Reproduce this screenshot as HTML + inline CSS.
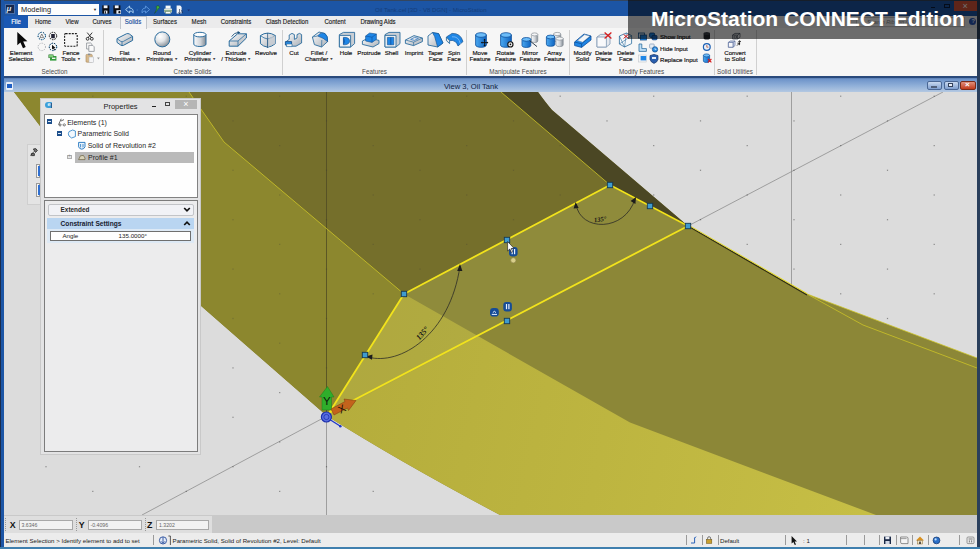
<!DOCTYPE html>
<html lang="en">
<head>
<meta charset="utf-8">
<title>MicroStation CONNECT Edition</title>
<style>
html,body{margin:0;padding:0;}
body{width:980px;height:549px;overflow:hidden;position:relative;background:#dcdcdc;font-family:"Liberation Sans",sans-serif;color:#222;}
.abs{position:absolute;}
.t{position:absolute;white-space:nowrap;line-height:1;}
.c{transform:translateX(-50%);text-align:center;}
/* title bar */
#titlebar{left:0;top:0;width:980px;height:16px;background:linear-gradient(#34465f 0,#34465f 1px,#1c55a5 1.2px);}
#tabrow{left:4px;top:16px;width:974px;height:12px;background:#ebebec;}
#ribbon{left:4px;top:28px;width:974px;height:48px;background:#f6f6f6;}
#viewtitle{left:4px;top:75.5px;width:974px;height:16.6px;background:linear-gradient(#2a4a7c 0,#2a4a7c 2px,#6b91c8 2.6px,#8fafd8 9.5px,#b6cae3 16.6px);}
#lborder{left:0;top:0;width:4px;height:549px;background:linear-gradient(90deg,#1b2c4c 0,#1b2c4c 0.9px,#1c55a5 1px);}
#rborder{left:977px;top:0;width:3px;height:549px;background:#2a3f5c;}
#bborder{left:0;top:547px;width:980px;height:2px;background:#3f7fae;}
#coordbar{left:4px;top:515px;width:973px;height:18px;background:#c9c9c9;}
#coordl{left:4px;top:516px;width:208px;height:17px;background:#dedede;}
#statusbar{left:4px;top:533px;width:973px;height:14px;background:#ececec;}
.tab{font-size:7.2px;top:18.2px;color:#1a1a1a;-webkit-text-stroke:0.15px;transform:translateX(-50%) scaleX(0.84);}
.rl{font-size:6.1px;color:#181818;-webkit-text-stroke:0.18px #181818;line-height:5.5px;text-align:center;transform:translateX(-50%);}
.da{font-size:3.4px;color:#555;vertical-align:1px;line-height:0;}
.gl{font-size:6.3px;color:#4a4a4a;top:68.8px;transform:translateX(-50%);}
.sep{position:absolute;top:30px;width:1px;height:45px;background:#d0d0d0;}
.st{font-size:6.1px;top:538px;color:#222;}
.ssep{position:absolute;top:535px;width:1px;height:10px;background:#9a9a9a;}
.ci{position:absolute;top:520px;height:10px;background:#f2f2f2;border:1px solid #a8a8a8;box-sizing:border-box;font-size:5.2px;color:#666;line-height:8px;padding-left:2px;}
.tr{font-size:7px;color:#1e1e1e;}
.cl{font-size:8.8px;font-weight:bold;top:521px;color:#111;}
</style>
</head>
<body>
<!-- frame -->
<div class="abs" id="titlebar"></div>
<div class="abs" id="tabrow"></div>
<div class="abs" id="ribbon"></div>
<div class="abs" id="viewtitle"></div>

<!-- VIEWPORT -->
<svg class="abs" style="left:4px;top:92px" width="973" height="423" viewBox="4 92 973 423">
  <rect x="4" y="92" width="973" height="423" fill="#dcdcdc"/>
  <!-- axis lines on background -->
  <g stroke="#8e8e8e" stroke-width="0.8" fill="none">
    <line x1="791.5" y1="92" x2="791.5" y2="287"/>
    <line x1="688" y1="226" x2="943" y2="92"/>
    <line x1="327" y1="416" x2="142" y2="515"/>
    <line x1="326.5" y1="416" x2="326.5" y2="515"/>
  </g>
  <g id="dots" fill="#3a3a3a" opacity="0.5"><rect x="92.2" y="95.6" width="1.2" height="1.2"/><rect x="185.7" y="95.6" width="1.2" height="1.2"/><rect x="279.1" y="95.6" width="1.2" height="1.2"/><rect x="372.6" y="95.6" width="1.2" height="1.2"/><rect x="466.1" y="95.6" width="1.2" height="1.2"/><rect x="559.6" y="95.6" width="1.2" height="1.2"/><rect x="653.1" y="95.6" width="1.2" height="1.2"/><rect x="746.6" y="95.6" width="1.2" height="1.2"/><rect x="840.1" y="95.6" width="1.2" height="1.2"/><rect x="933.6" y="95.6" width="1.2" height="1.2"/><rect x="45.4" y="120.3" width="1.2" height="1.2"/><rect x="138.9" y="120.3" width="1.2" height="1.2"/><rect x="232.4" y="120.3" width="1.2" height="1.2"/><rect x="325.9" y="120.3" width="1.2" height="1.2"/><rect x="419.4" y="120.3" width="1.2" height="1.2"/><rect x="512.9" y="120.3" width="1.2" height="1.2"/><rect x="606.4" y="120.3" width="1.2" height="1.2"/><rect x="699.9" y="120.3" width="1.2" height="1.2"/><rect x="793.4" y="120.3" width="1.2" height="1.2"/><rect x="886.9" y="120.3" width="1.2" height="1.2"/><rect x="92.2" y="145.0" width="1.2" height="1.2"/><rect x="185.7" y="145.0" width="1.2" height="1.2"/><rect x="279.1" y="145.0" width="1.2" height="1.2"/><rect x="372.6" y="145.0" width="1.2" height="1.2"/><rect x="466.1" y="145.0" width="1.2" height="1.2"/><rect x="559.6" y="145.0" width="1.2" height="1.2"/><rect x="653.1" y="145.0" width="1.2" height="1.2"/><rect x="746.6" y="145.0" width="1.2" height="1.2"/><rect x="840.1" y="145.0" width="1.2" height="1.2"/><rect x="933.6" y="145.0" width="1.2" height="1.2"/><rect x="45.4" y="169.7" width="1.2" height="1.2"/><rect x="138.9" y="169.7" width="1.2" height="1.2"/><rect x="232.4" y="169.7" width="1.2" height="1.2"/><rect x="325.9" y="169.7" width="1.2" height="1.2"/><rect x="419.4" y="169.7" width="1.2" height="1.2"/><rect x="512.9" y="169.7" width="1.2" height="1.2"/><rect x="606.4" y="169.7" width="1.2" height="1.2"/><rect x="699.9" y="169.7" width="1.2" height="1.2"/><rect x="793.4" y="169.7" width="1.2" height="1.2"/><rect x="886.9" y="169.7" width="1.2" height="1.2"/><rect x="92.2" y="194.4" width="1.2" height="1.2"/><rect x="185.7" y="194.4" width="1.2" height="1.2"/><rect x="279.1" y="194.4" width="1.2" height="1.2"/><rect x="372.6" y="194.4" width="1.2" height="1.2"/><rect x="466.1" y="194.4" width="1.2" height="1.2"/><rect x="559.6" y="194.4" width="1.2" height="1.2"/><rect x="653.1" y="194.4" width="1.2" height="1.2"/><rect x="746.6" y="194.4" width="1.2" height="1.2"/><rect x="840.1" y="194.4" width="1.2" height="1.2"/><rect x="933.6" y="194.4" width="1.2" height="1.2"/><rect x="45.4" y="219.1" width="1.2" height="1.2"/><rect x="138.9" y="219.1" width="1.2" height="1.2"/><rect x="232.4" y="219.1" width="1.2" height="1.2"/><rect x="325.9" y="219.1" width="1.2" height="1.2"/><rect x="419.4" y="219.1" width="1.2" height="1.2"/><rect x="512.9" y="219.1" width="1.2" height="1.2"/><rect x="606.4" y="219.1" width="1.2" height="1.2"/><rect x="699.9" y="219.1" width="1.2" height="1.2"/><rect x="793.4" y="219.1" width="1.2" height="1.2"/><rect x="886.9" y="219.1" width="1.2" height="1.2"/><rect x="92.2" y="243.8" width="1.2" height="1.2"/><rect x="185.7" y="243.8" width="1.2" height="1.2"/><rect x="279.1" y="243.8" width="1.2" height="1.2"/><rect x="372.6" y="243.8" width="1.2" height="1.2"/><rect x="466.1" y="243.8" width="1.2" height="1.2"/><rect x="559.6" y="243.8" width="1.2" height="1.2"/><rect x="653.1" y="243.8" width="1.2" height="1.2"/><rect x="746.6" y="243.8" width="1.2" height="1.2"/><rect x="840.1" y="243.8" width="1.2" height="1.2"/><rect x="933.6" y="243.8" width="1.2" height="1.2"/><rect x="45.4" y="268.5" width="1.2" height="1.2"/><rect x="138.9" y="268.5" width="1.2" height="1.2"/><rect x="232.4" y="268.5" width="1.2" height="1.2"/><rect x="325.9" y="268.5" width="1.2" height="1.2"/><rect x="419.4" y="268.5" width="1.2" height="1.2"/><rect x="512.9" y="268.5" width="1.2" height="1.2"/><rect x="606.4" y="268.5" width="1.2" height="1.2"/><rect x="699.9" y="268.5" width="1.2" height="1.2"/><rect x="793.4" y="268.5" width="1.2" height="1.2"/><rect x="886.9" y="268.5" width="1.2" height="1.2"/><rect x="92.2" y="293.2" width="1.2" height="1.2"/><rect x="185.7" y="293.2" width="1.2" height="1.2"/><rect x="279.1" y="293.2" width="1.2" height="1.2"/><rect x="372.6" y="293.2" width="1.2" height="1.2"/><rect x="466.1" y="293.2" width="1.2" height="1.2"/><rect x="559.6" y="293.2" width="1.2" height="1.2"/><rect x="653.1" y="293.2" width="1.2" height="1.2"/><rect x="746.6" y="293.2" width="1.2" height="1.2"/><rect x="840.1" y="293.2" width="1.2" height="1.2"/><rect x="933.6" y="293.2" width="1.2" height="1.2"/><rect x="45.4" y="317.9" width="1.2" height="1.2"/><rect x="138.9" y="317.9" width="1.2" height="1.2"/><rect x="232.4" y="317.9" width="1.2" height="1.2"/><rect x="325.9" y="317.9" width="1.2" height="1.2"/><rect x="419.4" y="317.9" width="1.2" height="1.2"/><rect x="512.9" y="317.9" width="1.2" height="1.2"/><rect x="606.4" y="317.9" width="1.2" height="1.2"/><rect x="699.9" y="317.9" width="1.2" height="1.2"/><rect x="793.4" y="317.9" width="1.2" height="1.2"/><rect x="886.9" y="317.9" width="1.2" height="1.2"/><rect x="92.2" y="342.6" width="1.2" height="1.2"/><rect x="185.7" y="342.6" width="1.2" height="1.2"/><rect x="279.1" y="342.6" width="1.2" height="1.2"/><rect x="372.6" y="342.6" width="1.2" height="1.2"/><rect x="466.1" y="342.6" width="1.2" height="1.2"/><rect x="559.6" y="342.6" width="1.2" height="1.2"/><rect x="653.1" y="342.6" width="1.2" height="1.2"/><rect x="746.6" y="342.6" width="1.2" height="1.2"/><rect x="840.1" y="342.6" width="1.2" height="1.2"/><rect x="933.6" y="342.6" width="1.2" height="1.2"/><rect x="45.4" y="367.3" width="1.2" height="1.2"/><rect x="138.9" y="367.3" width="1.2" height="1.2"/><rect x="232.4" y="367.3" width="1.2" height="1.2"/><rect x="325.9" y="367.3" width="1.2" height="1.2"/><rect x="419.4" y="367.3" width="1.2" height="1.2"/><rect x="512.9" y="367.3" width="1.2" height="1.2"/><rect x="606.4" y="367.3" width="1.2" height="1.2"/><rect x="699.9" y="367.3" width="1.2" height="1.2"/><rect x="793.4" y="367.3" width="1.2" height="1.2"/><rect x="886.9" y="367.3" width="1.2" height="1.2"/><rect x="92.2" y="392.0" width="1.2" height="1.2"/><rect x="185.7" y="392.0" width="1.2" height="1.2"/><rect x="279.1" y="392.0" width="1.2" height="1.2"/><rect x="372.6" y="392.0" width="1.2" height="1.2"/><rect x="466.1" y="392.0" width="1.2" height="1.2"/><rect x="559.6" y="392.0" width="1.2" height="1.2"/><rect x="653.1" y="392.0" width="1.2" height="1.2"/><rect x="746.6" y="392.0" width="1.2" height="1.2"/><rect x="840.1" y="392.0" width="1.2" height="1.2"/><rect x="933.6" y="392.0" width="1.2" height="1.2"/><rect x="45.4" y="416.7" width="1.2" height="1.2"/><rect x="138.9" y="416.7" width="1.2" height="1.2"/><rect x="232.4" y="416.7" width="1.2" height="1.2"/><rect x="325.9" y="416.7" width="1.2" height="1.2"/><rect x="419.4" y="416.7" width="1.2" height="1.2"/><rect x="512.9" y="416.7" width="1.2" height="1.2"/><rect x="606.4" y="416.7" width="1.2" height="1.2"/><rect x="699.9" y="416.7" width="1.2" height="1.2"/><rect x="793.4" y="416.7" width="1.2" height="1.2"/><rect x="886.9" y="416.7" width="1.2" height="1.2"/><rect x="92.2" y="441.4" width="1.2" height="1.2"/><rect x="185.7" y="441.4" width="1.2" height="1.2"/><rect x="279.1" y="441.4" width="1.2" height="1.2"/><rect x="372.6" y="441.4" width="1.2" height="1.2"/><rect x="466.1" y="441.4" width="1.2" height="1.2"/><rect x="559.6" y="441.4" width="1.2" height="1.2"/><rect x="653.1" y="441.4" width="1.2" height="1.2"/><rect x="746.6" y="441.4" width="1.2" height="1.2"/><rect x="840.1" y="441.4" width="1.2" height="1.2"/><rect x="933.6" y="441.4" width="1.2" height="1.2"/><rect x="45.4" y="466.1" width="1.2" height="1.2"/><rect x="138.9" y="466.1" width="1.2" height="1.2"/><rect x="232.4" y="466.1" width="1.2" height="1.2"/><rect x="325.9" y="466.1" width="1.2" height="1.2"/><rect x="419.4" y="466.1" width="1.2" height="1.2"/><rect x="512.9" y="466.1" width="1.2" height="1.2"/><rect x="606.4" y="466.1" width="1.2" height="1.2"/><rect x="699.9" y="466.1" width="1.2" height="1.2"/><rect x="793.4" y="466.1" width="1.2" height="1.2"/><rect x="886.9" y="466.1" width="1.2" height="1.2"/><rect x="92.2" y="490.8" width="1.2" height="1.2"/><rect x="185.7" y="490.8" width="1.2" height="1.2"/><rect x="279.1" y="490.8" width="1.2" height="1.2"/><rect x="372.6" y="490.8" width="1.2" height="1.2"/><rect x="466.1" y="490.8" width="1.2" height="1.2"/><rect x="559.6" y="490.8" width="1.2" height="1.2"/><rect x="653.1" y="490.8" width="1.2" height="1.2"/><rect x="746.6" y="490.8" width="1.2" height="1.2"/><rect x="840.1" y="490.8" width="1.2" height="1.2"/><rect x="933.6" y="490.8" width="1.2" height="1.2"/></g>
  <!-- main body (medium olive) -->
  <path d="M14,92 L538,92 Q546,103 552,110 L688,226 L807,294 L977,358 L977,515 L500,515 Q400,462 327,416 L200,305 Q90,200 40,126 Z" fill="#8c8737"/>
  <!-- dark olive upper area -->
  <path d="M189,92 L501,92 L610,185 L404,294 L224,142 Z" fill="#766f2c"/>
  <!-- shadow strip -->
  <path d="M501,92 L538,92 Q546,103 552,110 L688,226 L650,206 L610,185 Z" fill="#4b4724"/>
  <!-- bright yellow band -->
  <linearGradient id="gbright" gradientUnits="userSpaceOnUse" x1="340" y1="400" x2="860" y2="515"><stop offset="0" stop-color="#b5ad3c"/><stop offset="0.5" stop-color="#bdb540"/><stop offset="1" stop-color="#c6be45"/></linearGradient>
  <path d="M327,416 L404,294 L630,422.5 L876,515 L500,515 Q400,462 327,416 Z" fill="url(#gbright)"/>
  <path d="M189,92 L14,92 L40,126 Q90,200 200,305 L327,416 L404,294 L224,142 Z" fill="#8c872f"/>
  <!-- left of profile, lighter olive wedge stays body colour -->
  <!-- profile interior overlay -->
  <path d="M327,416 L404,294 L610,185 L688,226 Z" fill="#9d9c4c" opacity="0.22"/>
  <!-- vertical axis line over body -->
  <line x1="326.5" y1="92" x2="326.5" y2="416" stroke="#514d24" stroke-width="0.8"/>
  <!-- thin yellow edge lines -->
  <g stroke="#cfc628" stroke-width="0.9" fill="none" opacity="0.85">
    <path d="M189,92 L224,142 L404,294"/>
    <path d="M501,92 L610,185"/>
    <path d="M688,226 L807,294 L977,358"/>
    <path d="M807,294 L863,325 L977,368"/>
  </g>
  <path d="M610,185 L688,226 L807,295" stroke="#2f2c14" stroke-width="1.2" fill="none"/>
  <path d="M690,226 L807,293.5" stroke="#e2d820" stroke-width="0.9" fill="none"/>
  
  <clipPath id="upclip"><path d="M14,92 L501,92 L610,185 L404,294 L327,416 L200,305 Q90,200 40,126 Z"/></clipPath>
  <use href="#dots" clip-path="url(#upclip)" opacity="0.55"/>
  <!-- profile (thick yellow) -->
  <path d="M329,413 L404,294 L610,185 L688,226 Z" stroke="#f2e31c" stroke-width="1.8" fill="none" stroke-linejoin="round"/>
  <!-- dimension arcs -->
  <g stroke="#262626" stroke-width="0.75" fill="none">
    <path d="M368,357 C400,366 450,335 460,266"/>
    <path d="M576,204 C580,232 625,232 635,199"/>
  </g>
  <g fill="#1c1c1c">
    <path d="M460,264 L457.2,271 L462.4,271 Z"/>
    <path d="M366,356.6 L372.5,354.6 L372,359.8 Z"/>
    <path d="M575.6,202 L573.6,208.4 L578.6,208 Z"/>
    <path d="M636,197 L630.6,201 L635.4,204 Z"/>
  </g>
  <text x="422" y="336" font-family="Liberation Serif, serif" font-style="italic" font-weight="bold" font-size="7.8" fill="#161616" text-anchor="middle" transform="rotate(-50 422 333)">135°</text>
  <text x="600" y="221.5" font-family="Liberation Serif, serif" font-style="italic" font-weight="bold" font-size="6.6" fill="#161616" text-anchor="middle" transform="rotate(-8 600 219)">135°</text>
  <!-- vertex handles -->
  <g fill="#3f9bcf" stroke="#153a55" stroke-width="0.9">
    <rect x="401.3" y="291.3" width="5.4" height="5.4"/>
    <rect x="504.3" y="237.3" width="5.4" height="5.4"/>
    <rect x="607.3" y="182.3" width="5.4" height="5.4"/>
    <rect x="647.3" y="203.3" width="5.4" height="5.4"/>
    <rect x="685.3" y="223.3" width="5.4" height="5.4"/>
    <rect x="504.3" y="318.3" width="5.4" height="5.4"/>
    <rect x="362.3" y="352.3" width="5.4" height="5.4"/>
  </g>
  <!-- constraint badges -->
  <g>
    <rect x="509" y="247" width="8.6" height="9.4" rx="3" fill="#164c96"/>
    <rect x="511.6" y="249" width="1.2" height="5.2" fill="#e8f0ff"/><rect x="514" y="249" width="1.2" height="5.2" fill="#e8f0ff"/>
    <circle cx="513.3" cy="260.3" r="2.6" fill="#d9cf8a" stroke="#8c834a" stroke-width="0.6"/>
    <rect x="503.3" y="302" width="8.6" height="9.4" rx="3" fill="#164c96"/>
    <rect x="505.9" y="304" width="1.2" height="5.2" fill="#e8f0ff"/><rect x="508.3" y="304" width="1.2" height="5.2" fill="#e8f0ff"/>
    <rect x="490" y="308" width="8.8" height="8.6" rx="3.4" fill="#164c96"/>
    <path d="M491.8,314.4 h5.2 M492.8,312.6 q1.6,-2.6 3.2,0" stroke="#e8f0ff" stroke-width="1" fill="none"/>
  </g>
  <!-- mouse cursor -->
  <path d="M507.6,241.5 L507.6,251 L509.8,249 L511.4,252.4 L512.8,251.7 L511.2,248.5 L514,248.3 Z" fill="#fff" stroke="#111" stroke-width="0.6"/>
  <!-- ACS triad -->
  <g>
    <path d="M322,410 L322,397 L319.5,397 L327.5,386.5 L334,397 L331.5,397 L331.5,410 Z" fill="#2fae2b" stroke="#1f7d1c" stroke-width="0.5"/>
    <text x="326.8" y="405" font-size="11.5" fill="#0c1c0a" text-anchor="middle" font-family="Liberation Sans, sans-serif">Y</text>
    <path d="M331,409 L345,401.5 L344,399 L356,400.5 L348.5,410.5 L347.5,408 L334,415 Z" fill="#c3631c" stroke="#7a3a0c" stroke-width="0.5"/>
    <text x="342" y="412.4" font-size="10.5" fill="#1a0c04" text-anchor="middle" font-family="Liberation Sans, sans-serif" transform="rotate(-28 342 409)">X</text>
    <line x1="329" y1="419" x2="340" y2="426" stroke="#2038c8" stroke-width="1.3"/>
    <circle cx="340.3" cy="426.2" r="1.3" fill="#2038c8"/>
    <circle cx="326.4" cy="417" r="5" fill="#5a6fe0" stroke="#1c2fae" stroke-width="1.2"/>
    <circle cx="326.4" cy="417" r="2.6" fill="none" stroke="#1c2fae" stroke-width="0.8"/>
  </g>
</svg>

<!-- TABS -->
<div class="abs" style="left:4px;top:16px;width:24px;height:12px;background:#1a58b4;"></div>
<div class="t c tab" style="left:16px;color:#fff;">File</div>
<div class="abs" style="left:119.5px;top:15.5px;width:27px;height:13px;background:#f4f4f5;border:1px solid #c2c6cc;border-bottom:none;box-sizing:border-box;"></div>
<div class="t c tab" style="left:43px;">Home</div>
<div class="t c tab" style="left:72.3px;">View</div>
<div class="t c tab" style="left:101.7px;">Curves</div>
<div class="t c tab" style="left:132.6px;color:#1a4f9c;">Solids</div>
<div class="t c tab" style="left:165.3px;">Surfaces</div>
<div class="t c tab" style="left:198.8px;">Mesh</div>
<div class="t c tab" style="left:235.5px;">Constraints</div>
<div class="t c tab" style="left:287px;">Clash Detection</div>
<div class="t c tab" style="left:334.5px;">Content</div>
<div class="t c tab" style="left:377.5px;">Drawing Aids</div>
<!-- RIBBON LABELS -->
<div class="t rl" style="left:21px;top:50.4px;">Element<br>Selection</div>
<div class="t rl" style="left:71px;top:50.4px;">Fence<br>Tools <span class="da">▼</span></div>
<div class="t rl" style="left:124.5px;top:50.4px;">Flat<br>Primitives <span class="da">▼</span></div>
<div class="t rl" style="left:162px;top:50.4px;">Round<br>Primitives <span class="da">▼</span></div>
<div class="t rl" style="left:200px;top:50.4px;">Cylinder<br>Primitives <span class="da">▼</span></div>
<div class="t rl" style="left:236px;top:50.4px;">Extrude<br>/ Thicken <span class="da">▼</span></div>
<div class="t rl" style="left:266px;top:50.4px;">Revolve</div>
<div class="t rl" style="left:294px;top:50.4px;">Cut</div>
<div class="t rl" style="left:319px;top:50.4px;">Fillet /<br>Chamfer <span class="da">▼</span></div>
<div class="t rl" style="left:346px;top:50.4px;">Hole</div>
<div class="t rl" style="left:369px;top:50.4px;">Protrude</div>
<div class="t rl" style="left:391.5px;top:50.4px;">Shell</div>
<div class="t rl" style="left:414px;top:50.4px;">Imprint</div>
<div class="t rl" style="left:435.5px;top:50.4px;">Taper<br>Face</div>
<div class="t rl" style="left:454px;top:50.4px;">Spin<br>Face</div>
<div class="t rl" style="left:480px;top:50.4px;">Move<br>Feature</div>
<div class="t rl" style="left:505.5px;top:50.4px;">Rotate<br>Feature</div>
<div class="t rl" style="left:530px;top:50.4px;">Mirror<br>Feature</div>
<div class="t rl" style="left:554.5px;top:50.4px;">Array<br>Feature</div>
<div class="t rl" style="left:582.5px;top:50.4px;">Modify<br>Solid</div>
<div class="t rl" style="left:603.7px;top:50.4px;">Delete<br>Piece</div>
<div class="t rl" style="left:625.7px;top:50.4px;">Delete<br>Face</div>
<div class="t rl" style="left:735px;top:50.4px;">Convert<br>to Solid</div>
<div class="t" style="left:660px;top:33.9px;font-size:6.1px;color:#181818;-webkit-text-stroke:0.18px #181818;">Show Input</div>
<div class="t" style="left:660px;top:45.9px;font-size:6.1px;color:#181818;-webkit-text-stroke:0.18px #181818;">Hide Input</div>
<div class="t" style="left:660px;top:57.3px;font-size:6.1px;color:#181818;-webkit-text-stroke:0.18px #181818;">Replace Input</div>
<div class="t gl" style="left:54.5px;">Selection</div>
<div class="t gl" style="left:192.5px;">Create Solids</div>
<div class="t gl" style="left:374.5px;">Features</div>
<div class="t gl" style="left:518px;">Manipulate Features</div>
<div class="t gl" style="left:641.7px;">Modify Features</div>
<div class="t gl" style="left:735px;">Solid Utilities</div>
<div class="sep" style="left:103px;"></div>
<div class="sep" style="left:281.5px;"></div>
<div class="sep" style="left:466.3px;"></div>
<div class="sep" style="left:568.7px;"></div>
<div class="sep" style="left:714px;"></div>
<div class="sep" style="left:756px;"></div>
<!-- title bar content -->
<div class="abs" style="left:5px;top:4px;width:10px;height:10px;background:#16294e;border:1px solid #4a6ea8;box-sizing:border-box;"></div>
<div class="t" style="left:6.5px;top:5px;font-size:8px;font-style:italic;font-weight:bold;color:#dfe8f6;">μ</div>
<div class="abs" style="left:18px;top:4px;width:81px;height:11px;background:#fdfdfd;"></div>
<div class="t" style="left:21px;top:6px;font-size:7.4px;color:#222;">Modeling</div>
<div class="t" style="left:93px;top:8px;font-size:4px;color:#222;">▼</div>
<div class="t" style="left:375px;top:7.4px;font-size:6.1px;color:#153e7c;">Oil Tank.cel [3D - V8 DGN] - MicroStation</div>
<div class="abs" style="left:856px;top:17px;width:109px;height:10px;background:#fbfbfb;border:1px solid #c6c6c6;box-sizing:border-box;"></div>
<div class="t" style="left:867px;top:19.5px;font-size:5.6px;font-style:italic;color:#8a8a8a;">Search Ribbon (F4)</div>
<div class="abs" style="left:954px;top:1px;width:23px;height:10px;background:#d8563a;"></div>
<div class="t" style="left:962.6px;top:1.6px;font-size:9px;color:#fff;">×</div>
<div class="abs" style="left:943.6px;top:4px;width:6px;height:4.4px;border:1px solid #0a1c3c;border-top-width:1.4px;box-sizing:border-box;"></div>
<div class="abs" style="left:931px;top:7px;width:4px;height:1px;background:#0a1c3c;"></div>
<div class="abs" style="left:969.4px;top:18px;width:7px;height:7px;border-radius:4px;background:#2a55b8;"></div><div class="t" style="left:971.4px;top:19px;font-size:5.6px;font-weight:bold;color:#e8f0ff;">?</div>
<!-- view title -->
<div class="t c" style="left:471px;top:82.5px;font-size:7.6px;color:#10233f;">View 3, Oil Tank</div>
<div class="abs" style="left:6px;top:82px;width:7px;height:8px;background:#e8eef8;border-radius:1px;"></div>
<div class="abs" style="left:7px;top:84px;width:5px;height:4px;background:#1f5fc4;"></div>
<div class="abs" style="left:927px;top:81px;width:15px;height:9px;border-radius:2px;background:linear-gradient(#c9d9ef,#7f9fcf);border:1px solid #4a6794;box-sizing:border-box;"></div>
<div class="abs" style="left:931px;top:86px;width:6px;height:2px;background:#f4f7fb;border:0.5px solid #51617c;box-sizing:border-box;"></div>
<div class="abs" style="left:943.5px;top:81px;width:15px;height:9px;border-radius:2px;background:linear-gradient(#c9d9ef,#7f9fcf);border:1px solid #4a6794;box-sizing:border-box;"></div>
<div class="abs" style="left:948px;top:83px;width:5px;height:4px;border:1px solid #33425c;box-sizing:border-box;background:#e8eef8"></div>
<div class="abs" style="left:960px;top:81px;width:16px;height:9px;border-radius:2px;background:linear-gradient(#e0907c,#c23a1c);border:1px solid #7a2a18;box-sizing:border-box;"></div>
<div class="t" style="left:965px;top:80.5px;font-size:8px;font-weight:bold;color:#fff;">×</div>

<!-- RIBBON ICONS -->
<svg class="abs" style="left:0;top:0" width="980" height="80" viewBox="0 0 980 80">
<defs>
  <linearGradient id="gw" x1="0" y1="0" x2="1" y2="1"><stop offset="0" stop-color="#fbfbfc"/><stop offset="1" stop-color="#a9afb6"/></linearGradient>
  <linearGradient id="gcyl" x1="0" y1="0" x2="1" y2="0"><stop offset="0" stop-color="#fafbfc"/><stop offset="0.55" stop-color="#d0d4d9"/><stop offset="1" stop-color="#7f8891"/></linearGradient>
  <linearGradient id="gbl" x1="0" y1="0" x2="1" y2="0"><stop offset="0" stop-color="#4aa8f0"/><stop offset="1" stop-color="#0f63c0"/></linearGradient>
  <radialGradient id="gsph" cx="0.36" cy="0.30" r="0.78"><stop offset="0" stop-color="#ffffff"/><stop offset="0.45" stop-color="#e2e5e8"/><stop offset="1" stop-color="#79828b"/></radialGradient>
</defs>
<!-- quick access toolbar -->
<g>
  <rect x="102.3" y="5.4" width="7" height="8.2" fill="#0b0d14"/><rect x="103.7" y="5.4" width="3.8" height="2.8" fill="#f2f5fa"/><rect x="104.2" y="10.6" width="3.2" height="3" fill="#e6ebf4"/><rect x="104.9" y="11.2" width="1" height="2.4" fill="#0b0d14"/>
  <rect x="113.4" y="5.4" width="7" height="8.2" fill="#0b0d14"/><rect x="114.8" y="5.4" width="3.8" height="2.8" fill="#f2f5fa"/><rect x="116.4" y="10.2" width="4.6" height="3.6" fill="#e6ebf4"/><circle cx="119.4" cy="12.2" r="1.1" fill="#0b0d14"/>
  <path d="M125.6,9.6 L129.6,6 L129.6,8 Q133.6,8 133.2,12.8 Q132,10.8 129.6,11 L129.6,13 Z" fill="#1c55a5" stroke="#b6daf6" stroke-width="0.9" stroke-linejoin="round"/>
  <circle cx="137.2" cy="10" r="0.6" fill="#4f86d0"/>
  <path d="M149.6,9.6 L145.6,6 L145.6,8 Q141.6,8 142,12.8 Q143.2,10.8 145.6,11 L145.6,13 Z" fill="#1c55a5" stroke="#5f98e0" stroke-width="0.9" stroke-linejoin="round"/>
  <path d="M154.6,13.4 L156.8,8.6 L156,6.6 L158.4,5.4 L159.6,7.6 L158,9.2 Z" fill="#3fae3a" stroke="#163a14" stroke-width="0.4"/>
  <rect x="164.2" y="8.6" width="7.8" height="4" rx="0.6" fill="#dfe6d8"/><rect x="165.6" y="5.6" width="5" height="3" fill="#f8faf8"/><rect x="165.6" y="11.4" width="5" height="2.4" fill="#f8faf8" stroke="#5a7a5a" stroke-width="0.4"/><rect x="164.2" y="10.4" width="7.8" height="1" fill="#5f8a5f"/>
  <path d="M176.6,5.6 h3.6 l1.4,1.4 v6.6 h-5 z" fill="#f4f6fa"/><path d="M179.6,9 v4.6 M178.4,12.4 l1.2,1.4 l1.2,-1.4 M181.6,10 l1,3" stroke="#1b2c4c" stroke-width="0.7" fill="none"/>
  <path d="M187.4,9.4 h2.6 l-1.3,1.8 z" fill="#1b2c6c"/>
</g>
<!-- Element selection arrow -->
<path d="M17.3,32 L17.3,45.2 L20.4,42.4 L23,48.2 L25.7,47 L23.2,41.6 L27.4,41.3 Z" fill="#0a0a0a"/>
<!-- small selection icons -->
<g fill="none" stroke-width="1">
  <circle cx="41.8" cy="36" r="3.7" stroke="#3a9ad8" stroke-dasharray="1.6 1"/><circle cx="41.8" cy="36" r="3.7" stroke="#1a2a3a" stroke-dasharray="0.9 1.7"/>
  <path d="M40,37.6 L41.8,34 L43.6,37.6 Z" stroke="#444" stroke-width="0.6"/>
  <circle cx="53" cy="36" r="3.7" stroke="#111" stroke-dasharray="1.6 1"/>
  <rect x="51.2" y="34" width="3.6" height="4.2" fill="#223" stroke="none"/>
  <circle cx="41.8" cy="46.9" r="3.7" stroke="#8a8f98" stroke-dasharray="1.2 1.2" stroke-width="0.7"/>
  <circle cx="53" cy="46.9" r="3.7" stroke="#2a8ad0" stroke-dasharray="1.6 1"/><circle cx="53" cy="46.9" r="3.7" stroke="#111" stroke-dasharray="0.9 1.7"/>
  <path d="M52,44.8 L52,49.4 L53.2,48.4 L54.2,50.2 L55,49.8 L54.1,48.1 L55.6,48 Z" fill="#111" stroke="none"/>
</g>
<rect x="50" y="56" width="6.4" height="4.6" fill="#2f9a3a"/><rect x="48.8" y="54.8" width="4.4" height="3" fill="#7fd07a" stroke="#2a6a2f" stroke-width="0.5"/><rect x="52" y="57.6" width="3.4" height="1.4" fill="#eaf6ea"/>
<!-- fence -->
<rect x="64.6" y="33.6" width="12.6" height="12.6" fill="none" stroke="#1c1c1c" stroke-width="1.1" stroke-dasharray="2 1.1" rx="1"/>
<!-- scissors / copy / paste -->
<g stroke="#222" stroke-width="0.9" fill="none">
  <path d="M87.2,32.6 L91.6,38 M92.2,32.6 L87.8,38"/>
  <circle cx="87.6" cy="38.8" r="1.4"/><circle cx="91.8" cy="38.8" r="1.4"/>
</g>
<g stroke="#8a8f96" stroke-width="0.8" fill="#fafafa">
  <path d="M86.6,43 h4 l1.4,1.4 v4.6 h-5.4 z"/><path d="M88.8,45.4 h4 l1.4,1.4 v4.6 h-5.4 z"/>
</g>
<rect x="86" y="54.4" width="6.2" height="7.8" rx="0.8" fill="#d8b98a" stroke="#a8865a" stroke-width="0.6"/><rect x="88" y="53.6" width="2.4" height="1.6" fill="#8a8f96"/><rect x="89" y="57" width="4.6" height="5.6" fill="#f4f4f6" stroke="#aeb2b8" stroke-width="0.5"/>
<path d="M97,57.6 h2.8 l-1.4,1.8 z" fill="#9a9a9a"/>

<!-- Flat primitives -->
<g stroke="#2c6d9e" stroke-width="1" stroke-linejoin="round">
  <path d="M117,38.6 L126.4,33.8 Q128,33.2 129.4,34 L132.6,36.4 L132.6,40.4 L123.4,45.4 Q122,46 120.6,45 L117,42.4 Z" fill="url(#gw)"/>
  <path d="M117,38.6 L120.8,41.4 Q122,42 123.4,41.4 L132.6,36.4 M122,42 L122,45.6" fill="none" stroke-width="0.8"/>
</g>
<!-- Round primitives -->
<circle cx="162.3" cy="39.4" r="7.5" fill="url(#gsph)" stroke="#2c6d9e" stroke-width="1"/>
<!-- Cylinder -->
<g stroke="#2c6d9e" stroke-width="1">
  <path d="M193.8,34.6 L193.8,44.2 A6.1,2.3 0 0 0 206,44.2 L206,34.6 Z" fill="url(#gcyl)"/>
  <ellipse cx="199.9" cy="34.6" rx="6.1" ry="2.3" fill="#fdfdfd"/>
</g>
<!-- Extrude / thicken -->
<g stroke="#2c6d9e" stroke-width="1" stroke-linejoin="round">
  <path d="M229.2,41 L237.6,33.8 L246.4,33.8 L246.4,38 L238,46.2 L229.2,46.2 Z" fill="url(#gw)"/>
  <path d="M229.2,41 L238,41 L246.4,33.8 M238,41 L238,46.2" fill="none" stroke-width="0.8"/>
  <path d="M231.6,36.6 Q234,32.6 238.6,32.4" fill="none" stroke="#1b4f7a" stroke-width="0.9"/><path d="M237.6,31 L240.4,32.4 L237.8,34 Z" fill="#1b4f7a" stroke="none"/>
</g>
<!-- Revolve -->
<g stroke="#2c6d9e" stroke-width="1" stroke-linejoin="round">
  <path d="M260.4,35.6 Q267.6,30.6 275.4,35.6 L275.4,43.6 Q272,46.6 267.6,47.2 Q263.4,46.6 260.4,43.6 Z" fill="url(#gw)"/>
  <path d="M260.4,35.6 Q264,38.4 267.6,39 Q272,38.4 275.4,35.6 M267.6,39 L267.6,47.2" fill="none" stroke-width="0.8"/>
  <path d="M267.6,39 L275.4,35.6 L275.4,43.6 L267.6,47.2 Z" fill="#c9ced4" stroke="none" opacity="0.8"/>
  <line x1="267.6" y1="33" x2="267.6" y2="48" stroke="#1b4f7a" stroke-width="0.7"/>
</g>

<!-- Cut -->
<g stroke="#2c6d9e" stroke-width="0.9" stroke-linejoin="round">
  <path d="M286.4,41.4 L289.2,39.4 L289.2,35 L292,33.4 L294.4,34.6 L294.4,39.4 L297,38 L297,34.6 L299.6,33.4 L301.6,34.6 L301.6,43 L296,46.2 L286.4,46.2 Z" fill="url(#gw)"/>
  <rect x="285.4" y="41.6" width="6.2" height="3.4" fill="#2a8ae0" stroke="#15508c"/>
  <rect x="286.6" y="44" width="5.4" height="2.6" fill="#f6f8fa" stroke="#2c6d9e" stroke-width="0.6"/>
</g>
<!-- Fillet / chamfer -->
<g stroke="#2c6d9e" stroke-width="0.9" stroke-linejoin="round">
  <path d="M312.4,37 L319,32 L325,33.6 Q328,36 327.6,41.6 L321.6,47 L314.4,44.6 Z" fill="url(#gw)"/>
  <path d="M317.6,36 Q321,31.4 325,33.6 Q328,36 327.6,41.6 Q324,38 317.6,36 Z" fill="#1f86e6" stroke="#15508c" stroke-width="0.6"/>
  <path d="M312.4,37 L317.6,36 M321.6,47 L321.8,40" fill="none" stroke-width="0.7"/>
</g>
<!-- Hole -->
<g stroke="#2c6d9e" stroke-width="0.9" stroke-linejoin="round">
  <path d="M339.4,34.6 L343.4,32.4 L354.6,32.4 L354.6,43.6 L350.6,47 L339.4,47 Z" fill="#c9ced4"/>
  <rect x="339.4" y="35.4" width="11.2" height="11.6" fill="#f1f3f5"/>
  <path d="M343.4,37.4 Q349.4,37 349.6,41 Q349.4,45 343.4,44.8 Z" fill="#1f86e6" stroke="#15508c" stroke-width="0.6"/>
  <path d="M343.4,37.4 Q346,41 343.4,44.8" fill="#0d4f9c" stroke="none"/>
</g>
<!-- Protrude -->
<g stroke="#2c6d9e" stroke-width="0.9" stroke-linejoin="round">
  <path d="M362.4,41 L368.4,38 L379,40.4 L379,43.6 L373,47 L362.4,44.4 Z" fill="url(#gw)"/>
  <path d="M365.6,36 L369.6,33 L376.4,34 L376.4,39.4 L372,42.4 L365.6,41 Z" fill="#1f86e6" stroke="#15508c" stroke-width="0.6"/>
  <path d="M365.6,36 L372,37.2 L376.4,34 M372,37.2 L372,42.4" fill="none" stroke="#0d4f9c" stroke-width="0.6"/>
</g>
<!-- Shell -->
<g stroke="#2c6d9e" stroke-width="0.9" stroke-linejoin="round">
  <path d="M385,34.6 L389,32.4 L400,32.4 L400,43.6 L396,47 L385,47 Z" fill="#c9ced4"/>
  <rect x="385" y="35.4" width="11" height="11.6" fill="#f1f3f5"/>
  <rect x="387.4" y="37.4" width="6.4" height="7.4" fill="#1f86e6" stroke="#15508c" stroke-width="0.6"/>
  <path d="M390.8,37.4 V44.8" stroke="#0d4f9c" stroke-width="0.8"/>
</g>
<!-- Imprint -->
<g stroke="#2c6d9e" stroke-width="0.9" stroke-linejoin="round">
  <path d="M405.4,40 L414,35.6 L422.4,38 L422.4,41.6 L413.6,45.6 L405.4,43.4 Z" fill="url(#gw)"/>
  <path d="M405.4,40 L413.6,42.2 L422.4,38 M413.6,42.2 V45.6" fill="none" stroke-width="0.7"/>
  <path d="M410.6,39.4 L414.6,37.4 L418.4,38.4 L414.4,40.4 Z" fill="#dfe3e7" stroke="#1f6fbf" stroke-width="0.7"/>
</g>
<!-- Taper face -->
<g stroke="#2c6d9e" stroke-width="0.9" stroke-linejoin="round">
  <path d="M428,36 L432.4,32.6 L438.6,33.6 L443,43 L437.6,47 L428,45 Z" fill="url(#gw)"/>
  <path d="M432.4,32.6 L438.6,33.6 L443,43 L437.6,47 L434.6,36.4 Z" fill="#1f86e6" stroke="#15508c" stroke-width="0.6"/>
</g>
<!-- Spin face -->
<g stroke="#2c6d9e" stroke-width="0.9" stroke-linejoin="round">
  <path d="M446.4,37 L452,33.4 Q460.6,33 463,41.6 L458,46 Q456,39.4 449.6,40.6 Z" fill="#1f86e6" stroke="#15508c" stroke-width="0.7"/>
  <path d="M446.4,37 L449.6,40.6 L449.6,43.6 L446.4,40.6 Z" fill="#dfe3e7"/>
  <path d="M452,36.8 Q458.6,36 460.4,43.8" fill="none" stroke="#8fc6f6" stroke-width="0.7"/>
</g>

<!-- Move feature -->
<g id="bcyl">
  <path d="M475.6,35 L475.6,45 A5.4,2.3 0 0 0 486.4,45 L486.4,35 Z" fill="url(#gbl)" stroke="#0d4f9c" stroke-width="0.8"/>
  <ellipse cx="481" cy="35" rx="5.4" ry="2.3" fill="#6cbcf8" stroke="#0d4f9c" stroke-width="0.8"/>
</g>
<path d="M484.6,39.8 V45.4 M481.8,42.6 H487.4" stroke="#111" stroke-width="0.9" fill="none"/>
<path d="M484.6,38.8 l-1.2,1.5 h2.4 z M484.6,46.4 l-1.2,-1.5 h2.4 z M480.8,42.6 l1.5,-1.2 v2.4 z M488.4,42.6 l-1.5,-1.2 v2.4 z" fill="#111"/>
<!-- Rotate feature -->
<path d="M500.6,35 L500.6,45 A5.4,2.3 0 0 0 511.4,45 L511.4,35 Z" fill="url(#gbl)" stroke="#0d4f9c" stroke-width="0.8"/>
<ellipse cx="506" cy="35" rx="5.4" ry="2.3" fill="#6cbcf8" stroke="#0d4f9c" stroke-width="0.8"/>
<circle cx="510.4" cy="44.4" r="2.6" fill="#e8e8e8" stroke="#111" stroke-width="1.1"/><circle cx="510.4" cy="44.4" r="0.8" fill="#111"/>
<!-- Mirror feature -->
<path d="M531.4,34.4 L531.4,41 A3.2,1.5 0 0 0 537.8,41 L537.8,34.4 Z" fill="url(#gcyl)" stroke="#8a9098" stroke-width="0.7"/>
<ellipse cx="534.6" cy="34.4" rx="3.2" ry="1.5" fill="#f4f5f6" stroke="#8a9098" stroke-width="0.7"/>
<path d="M522,39.4 L522,45.6 A4.4,1.9 0 0 0 530.8,45.6 L530.8,39.4 Z" fill="url(#gbl)" stroke="#0d4f9c" stroke-width="0.8"/>
<ellipse cx="526.4" cy="39.4" rx="4.4" ry="1.9" fill="#6cbcf8" stroke="#0d4f9c" stroke-width="0.8"/>
<path d="M529.6,40.6 L537,46.6" stroke="#1b2a3a" stroke-width="0.9"/>
<!-- Array feature -->
<g stroke="#8a9098" stroke-width="0.7">
  <path d="M553.6,34 L553.6,40 A3.6,1.6 0 0 0 560.8,40 L560.8,34 Z" fill="url(#gcyl)"/><ellipse cx="557.2" cy="34" rx="3.6" ry="1.6" fill="#f4f5f6"/>
  <path d="M556,38.6 L556,45 A3.6,1.6 0 0 0 563.2,45 L563.2,38.6 Z" fill="url(#gcyl)"/><ellipse cx="559.6" cy="38.6" rx="3.6" ry="1.6" fill="#f4f5f6"/>
</g>
<path d="M546.4,37 L546.4,44.4 A4.2,1.9 0 0 0 554.8,44.4 L554.8,37 Z" fill="url(#gbl)" stroke="#0d4f9c" stroke-width="0.8"/>
<ellipse cx="550.6" cy="37" rx="4.2" ry="1.9" fill="#6cbcf8" stroke="#0d4f9c" stroke-width="0.8"/>

<!-- Modify solid -->
<g stroke="#0d4f9c" stroke-width="0.8" stroke-linejoin="round">
  <path d="M574.6,42 L584,34 L591,36 L591,40 L581.6,47.4 L574.6,45.6 Z" fill="#1f86e6"/>
  <path d="M577.4,40.6 L584.6,34.6 L590,36.2 L582.6,42.2 Z" fill="#f4f6f8" stroke="#6a8fb4" stroke-width="0.6"/>
  <path d="M574.6,42 L581.6,43.8 L591,36 M581.6,43.8 V47.4" fill="none" stroke="#0a3f80" stroke-width="0.6"/>
</g>
<!-- Delete piece -->
<g stroke="#7f98b4" stroke-width="0.8" stroke-linejoin="round">
  <path d="M597,37 L600.6,34.4 L610,34.4 L610,44 L606.4,47 L597,47 Z" fill="#e4e8ee"/>
  <rect x="597" y="37" width="9.4" height="10" fill="#f8f9fb"/>
  <path d="M604.6,32.4 L611.4,38.6 M611.4,32.4 L604.6,38.6" stroke="#d81e1e" stroke-width="1.3" fill="none"/>
</g>
<!-- Delete face -->
<g stroke="#2c6d9e" stroke-width="0.8" fill="none" stroke-linejoin="round">
  <path d="M619.4,36 L626.4,33 L631.6,35.6 L631.6,43.6 L624.6,47 L619.4,44 Z" fill="#f6f8fa"/>
  <path d="M619.4,36 L624.6,47 M626.4,33 L624.6,47 M619.4,44 L631.6,35.6" stroke-width="0.6"/>
  <path d="M623.6,34.4 L628.4,38.4 M628.4,34.4 L623.6,38.4" stroke="#d81e1e" stroke-width="1"/>
</g>
<!-- Modify features small icons -->
<g>
  <rect x="638.4" y="33" width="6" height="5" fill="#d8e6f4" stroke="#15508c" stroke-width="0.8"/><rect x="640.4" y="35" width="6" height="5" fill="#1f86e6" stroke="#15508c" stroke-width="0.8"/>
  <rect x="649.6" y="33" width="5" height="4.4" rx="1" fill="#1f86e6" stroke="#0a3f80" stroke-width="0.8"/><rect x="652" y="35.4" width="5" height="4.4" rx="1" fill="#1a66c0" stroke="#0a3f80" stroke-width="0.8"/>
  <path d="M639,44 V51.4 H646.4 V48.6 H641.8 V44 Z" fill="#bfe0f8" stroke="#2c6d9e" stroke-width="0.8"/>
  <rect x="649.6" y="44" width="4.6" height="4.2" rx="0.8" fill="#e4ecf4" stroke="#7f98b4" stroke-width="0.7"/><circle cx="655" cy="49.4" r="2.7" fill="#2a8ae0" stroke="#15508c" stroke-width="0.7"/><path d="M655,47.8 V49.6 H656.4" stroke="#fff" stroke-width="0.6" fill="none"/>
  <rect x="638.6" y="55" width="7.6" height="7" fill="#f4f6f8" stroke="#c4c8ce" stroke-width="0.6"/><rect x="640.6" y="56" width="5.6" height="4.4" fill="#1f86e6"/>
  <path d="M650,55.6 L654,54.4 L658,55.6 V59.4 Q657,62.6 654,63.4 Q651,62.6 650,59.4 Z" fill="#2a5fae" stroke="#1b3a6a" stroke-width="0.7"/><path d="M652,57 h4 v2 h-4 z" fill="#e4ecf4"/>
  <path d="M703.6,33.6 V38 A3.2,1.5 0 0 0 710,38 V33.6 Z" fill="#23272e"/><ellipse cx="706.8" cy="33.6" rx="3.2" ry="1.5" fill="#3a3f48"/>
  <circle cx="706.8" cy="47" r="3.4" fill="#e8eef6" stroke="#1a5fb4" stroke-width="1.2"/><path d="M706.8,45 V47.2 H708.4" stroke="#a8402a" stroke-width="0.7" fill="none"/>
  <path d="M703.4,55.4 V61 A3.1,1.5 0 0 0 709.6,61 V55.4 Z" fill="url(#gbl)" stroke="#0d4f9c" stroke-width="0.7"/><ellipse cx="706.5" cy="55.4" rx="3.1" ry="1.5" fill="#6cbcf8" stroke="#0d4f9c" stroke-width="0.7"/>
  <path d="M708,59 L711.4,62.4 M711.4,59 L708,62.4" stroke="#d81e1e" stroke-width="1.1"/>
</g>
<!-- Convert to solid -->
<g stroke="#3b4450" stroke-width="0.7" fill="none">
  <path d="M732.6,35 L735,33.4 L740,33.4 L740,37.4 L737.6,39 L732.6,39 Z M732.6,35 H737.6 V39 M737.6,35 L740,33.4"/>
  <rect x="734" y="36" width="2.4" height="2" />
</g>
<g stroke="#5a6f9c" stroke-width="0.7" stroke-linejoin="round">
  <path d="M728.4,42.4 L730.4,41 L735,41 L735,45.6 L733,47.2 L728.4,47.2 Z" fill="#dfe4f4"/>
  <path d="M728.4,42.4 H733 V47.2 M733,42.4 L735,41" fill="none"/>
  <rect x="728.4" y="42.4" width="4.6" height="4.8" fill="#f6f7fb"/>
</g>
<path d="M737,45.6 L739.4,43.2 M739.4,43.2 v2 M739.4,43.2 h-2 M739.6,41 v3.4 M738.4,42 l1.2,-1.4 l1.2,1.4" stroke="#111" stroke-width="0.8" fill="none"/>
</svg>

<!-- PROPERTIES PANEL -->
<!-- mini tool settings panel behind -->
<div class="abs" style="left:27px;top:144px;width:14px;height:61px;background:#e4e4e4;border:1px solid #cfcfcf;box-sizing:border-box;"></div>
<svg class="abs" style="left:29px;top:147px" width="10" height="10" viewBox="0 0 10 10"><path d="M1.5,8.5 L5,4.5 M4.4,2 Q7.4,0.6 8.4,3.6 L6.4,5.4 Z M2.4,6.6 h3 v2 h-3 z" stroke="#333" stroke-width="0.9" fill="#777"/></svg>
<div class="abs" style="left:36px;top:164px;width:4px;height:14px;background:#f6f6f6;border:1px solid #9a9a9a;box-sizing:border-box;"></div>
<div class="abs" style="left:37.5px;top:166px;width:2.5px;height:10px;background:#2f6fd0;"></div>
<div class="abs" style="left:36px;top:183px;width:4px;height:14px;background:#f6f6f6;border:1px solid #9a9a9a;box-sizing:border-box;"></div>
<div class="abs" style="left:37.5px;top:185px;width:2.5px;height:10px;background:#2f6fd0;"></div>

<div class="abs" id="panel" style="left:40px;top:98px;width:161px;height:357px;background:#e3e3e4;border:1px solid #c9c9c9;box-sizing:border-box;"></div>
<!-- title -->
<div class="abs" style="left:45px;top:102px;width:7px;height:6px;border-radius:3px 1px 1px 3px;background:#3d9fd8;"></div>
<div class="t" style="left:47.6px;top:102.3px;font-size:5.5px;font-weight:bold;color:#e8f6ff;">e</div>
<div class="abs" style="left:51.4px;top:102.6px;width:1px;height:5px;background:#2a5f90;"></div>
<div class="t c" style="left:120.5px;top:102.6px;font-size:7.5px;color:#1c1c1c;">Properties</div>
<div class="abs" style="left:152px;top:105.6px;width:4.4px;height:1.4px;background:#222;"></div>
<div class="abs" style="left:164.6px;top:101.6px;width:5.6px;height:4.6px;border:1px solid #444;border-top-width:1.4px;box-sizing:border-box;"></div>
<div class="abs" style="left:175px;top:100px;width:21.5px;height:9.4px;background:#b5b5b5;"></div>
<div class="t c" style="left:185.8px;top:100.2px;font-size:9px;color:#fff;">×</div>
<!-- tree box -->
<div class="abs" style="left:44px;top:114px;width:154px;height:84px;background:#fefefe;border:1px solid #828282;box-sizing:border-box;"></div>
<div class="abs" style="left:75px;top:152px;width:118.5px;height:10.5px;background:#bababa;"></div>
<div class="abs" style="left:47px;top:119.4px;width:4.6px;height:4.6px;background:#1d4f8c;"></div><div class="abs" style="left:48px;top:121.3px;width:2.6px;height:0.9px;background:#dfeaf6;"></div>
<div class="abs" style="left:57.4px;top:131.4px;width:4.6px;height:4.6px;background:#1d4f8c;"></div><div class="abs" style="left:58.4px;top:133.3px;width:2.6px;height:0.9px;background:#dfeaf6;"></div>
<div class="abs" style="left:67.4px;top:155px;width:4.2px;height:4.2px;background:#e6e6e6;border:0.6px solid #b0b0b0;box-sizing:border-box;"></div><div class="t" style="left:68.1px;top:154.3px;font-size:4.6px;color:#8a8a8a;">+</div>
<svg class="abs" style="left:56px;top:116px" width="40" height="48" viewBox="56 116 40 48">
  <path d="M58.6,124.6 L61.2,118.8 M61,121 L64,119.6 M60,124 a1,1 0 1 0 0.1,0 M64.2,123.8 a1.1,1.1 0 1 0 0.1,0" stroke="#444" stroke-width="0.8" fill="none"/>
  <path d="M69,131.6 L72.6,130 L75.4,131 L75.4,136.6 L71.6,138 L69,136 Q67.6,133.8 69,131.6 Z" fill="#f2f8fe" stroke="#2a7fc4" stroke-width="0.8"/>
  <path d="M78.6,142.4 h6.4 v4.4 q-0.8,2.2 -3.2,2.4 q-2.4,-0.2 -3.2,-2.4 z" fill="#eaf4fc" stroke="#1f74bf" stroke-width="0.9"/><path d="M80.6,144 v3.4 M83,144 v3.4" stroke="#1f74bf" stroke-width="0.8"/>
  <path d="M78.6,159.6 L80.4,155.8 L83.4,155.4 L85,158 L85,159.6 Z" fill="#d8d2b8" stroke="#6a6240" stroke-width="0.7"/>
</svg>
<div class="t tr" style="left:67.2px;top:118.6px;">Elements (1)</div>
<div class="t tr" style="left:77.6px;top:130.4px;">Parametric Solid</div>
<div class="t tr" style="left:87.7px;top:142px;">Solid of Revolution #2</div>
<div class="t tr" style="left:88px;top:153.8px;">Profile #1</div>
<!-- property box -->
<div class="abs" style="left:44px;top:200.4px;width:154px;height:251.6px;background:#ececed;border:1px solid #7c7c7c;box-sizing:border-box;"></div>
<div class="abs" style="left:47.6px;top:203.6px;width:146px;height:12px;background:#f1f2f6;border:1px solid #c2c4c8;border-radius:2px;box-sizing:border-box;"></div>
<div class="t" style="left:60.6px;top:206.7px;font-size:6.4px;font-weight:bold;color:#2a2a2a;">Extended</div>
<svg class="abs" style="left:183px;top:206px" width="8" height="7" viewBox="0 0 8 7"><path d="M1.2,2 L4,4.8 L6.8,2" stroke="#111" stroke-width="1.7" fill="none"/></svg>
<div class="abs" style="left:47px;top:229px;width:147px;height:14px;background:#dde9f5;"></div>
<div class="abs" style="left:47px;top:218px;width:147px;height:11.4px;background:#b9d5f1;"></div>
<div class="t" style="left:60.6px;top:220.9px;font-size:6.6px;font-weight:bold;color:#16202e;">Constraint Settings</div>
<svg class="abs" style="left:183px;top:220px" width="8" height="7" viewBox="0 0 8 7"><path d="M1.2,5 L4,2.2 L6.8,5" stroke="#111" stroke-width="1.7" fill="none"/></svg>
<div class="abs" style="left:50px;top:231px;width:141px;height:10px;background:#fefefe;border:1px solid #6f6f6f;box-sizing:border-box;"></div>
<div class="t" style="left:62.4px;top:233px;font-size:6.2px;color:#1c1c1c;">Angle</div>
<div class="t" style="left:118.6px;top:233px;font-size:6.2px;color:#1c1c1c;">135.0000°</div>

<!-- bottom bars -->
<div class="abs" id="coordbar"></div>
<div class="abs" id="coordl"></div>
<div class="abs" id="statusbar"></div>

<!-- coord + status content -->
<div class="abs" style="left:5px;top:518px;width:1px;height:13px;background:repeating-linear-gradient(#9a9a9a 0 1px,transparent 1px 2px);"></div>
<div class="t cl" style="left:9.8px;">X</div><div class="ci" style="left:18.5px;width:54px;">3.6346</div>
<div class="abs" style="left:76px;top:518px;width:1px;height:13px;background:repeating-linear-gradient(#9a9a9a 0 1px,transparent 1px 2px);"></div>
<div class="t cl" style="left:78.8px;">Y</div><div class="ci" style="left:87.5px;width:54px;">-0.4096</div>
<div class="abs" style="left:145px;top:518px;width:1px;height:13px;background:repeating-linear-gradient(#9a9a9a 0 1px,transparent 1px 2px);"></div>
<div class="t cl" style="left:147px;">Z</div><div class="ci" style="left:156px;width:53px;">1.3202</div>
<div class="t st" style="left:5.4px;">Element Selection &gt; Identify element to add to set</div>
<div class="ssep" style="left:152.5px;"></div>
<svg class="abs" style="left:158px;top:535px" width="14" height="11" viewBox="0 0 14 11"><circle cx="5" cy="5.4" r="3.6" fill="#e4ecf8" stroke="#2a4f9c" stroke-width="0.9"/><path d="M5,2 V8 M3.2,6.4 L5,8.4 L6.8,6.4" stroke="#2a4f9c" stroke-width="0.9" fill="none"/><path d="M10.4,1 h2 v9" stroke="#333" stroke-width="0.8" fill="none"/></svg>
<div class="t st" style="left:172.6px;">Parametric Solid, Solid of Revolution #2, Level: Default</div>
<div class="ssep" style="left:686px;"></div><div class="ssep" style="left:701.5px;"></div><div class="ssep" style="left:717.5px;"></div><div class="ssep" style="left:785px;"></div>
<div class="ssep" style="left:846px;"></div><div class="ssep" style="left:864px;"></div><div class="ssep" style="left:879px;"></div><div class="ssep" style="left:895.6px;"></div><div class="ssep" style="left:911.6px;"></div><div class="ssep" style="left:928px;"></div><div class="ssep" style="left:958.5px;"></div>
<svg class="abs" style="left:686px;top:534px" width="292" height="12" viewBox="686 534 292 12">
  <path d="M691,543 h3.6 v-5.4 M696,536.6 l-1.4,1.6" stroke="#2a62b8" stroke-width="1" fill="none"/>
  <rect x="706.4" y="539.4" width="5.4" height="4" fill="#c8a030" stroke="#6a5010" stroke-width="0.5"/><path d="M707.6,539.4 v-1.2 a1.5,1.5 0 0 1 3,0 v1.2" stroke="#555" stroke-width="0.8" fill="none"/>
  <path d="M791.6,536 V543.6 L793.4,542 L794.8,545 L796,544.4 L794.6,541.6 L797,541.5 Z" fill="#111"/>
  <rect x="884" y="536.6" width="7" height="7.4" fill="#1b2a48"/><rect x="885.4" y="536.6" width="4" height="2.6" fill="#e8ecf4"/><rect x="885.4" y="541" width="4.2" height="3" fill="#cfd6e4"/>
  <path d="M900.6,537 h6 q1.4,0 1.4,1.4 v5.2 h-6 q-1.4,0 -1.4,-1.4 z" fill="#f4f4f4" stroke="#666" stroke-width="0.7"/><path d="M900.6,538.6 h6" stroke="#666" stroke-width="0.6"/>
  <path d="M916,540.6 L920,536.6 L924,540.6 Z" fill="#d89020"/><rect x="917.4" y="540.6" width="5.2" height="3.4" fill="#f0e4c8" stroke="#8a6a30" stroke-width="0.5"/><rect x="919.2" y="541.6" width="1.6" height="2.4" fill="#333"/>
  <circle cx="936.5" cy="540.4" r="3.4" fill="#2a6fc8" stroke="#12346a" stroke-width="0.7"/><circle cx="935.6" cy="539.4" r="1.1" fill="#bfe0ff"/>
  <rect x="967" y="537" width="7" height="6.6" rx="1" fill="#e8e8e8" stroke="#777" stroke-width="0.7"/><path d="M968.6,539 h4 M969.4,540.4 v2 M971.6,540.4 v2" stroke="#555" stroke-width="0.7"/>
</svg>
<div class="t st" style="left:720px;">Default</div>
<div class="t st" style="left:803px;">: 1</div>

<!-- borders -->
<div class="abs" id="lborder"></div>
<div class="abs" id="rborder"></div>
<div class="abs" id="bborder"></div>

<!-- overlay -->
<div class="abs" id="overlay" style="left:628px;top:0;width:352px;height:38.5px;background:rgba(0,0,0,0.56);"></div>
<div class="t" style="left:651px;top:8px;font-size:21px;font-weight:bold;color:#fff;">MicroStation CONNECT Edition</div>
</body>
</html>
